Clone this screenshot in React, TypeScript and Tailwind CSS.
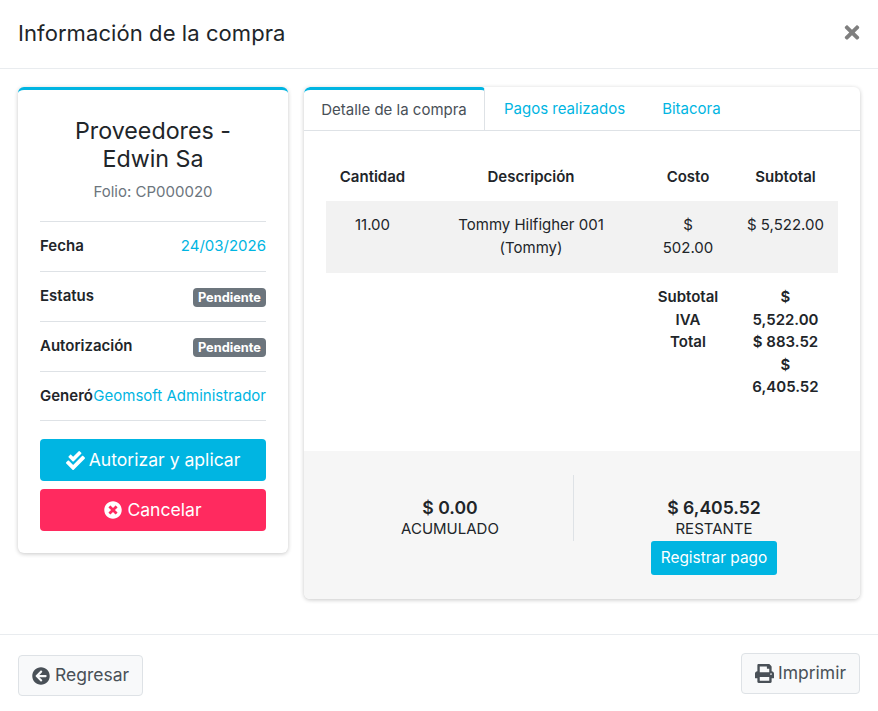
import { FaCheckDouble, FaTimesCircle, FaArrowCircleLeft, FaPrint, FaTimes } from "react-icons/fa";

function Row({ label, children, last }: { label: string; children: React.ReactNode; last?: boolean }) {
  return (
    <div className={`flex justify-between items-center h-[50px] border-t border-[#dee2e6] ${last ? "border-b" : ""}`}>
      <span className="font-semibold text-[15px] text-[#212529]">{label}</span>
      {children}
    </div>
  );
}

function Badge() {
  return <span className="bg-[#6c757d] text-white text-[12.8px] leading-[13px] font-bold px-[5px] py-[3px] rounded-[4px] mt-[2px]">Pendiente</span>;
}

export default function App() {
  return (
    <div className="w-[878px] h-[711px] bg-white flex flex-col text-[#212529] overflow-hidden" style={{ fontFamily: "Inter, 'Noto Sans', sans-serif" }}>
      <header className="h-[69px] shrink-0 border-b border-[#e9ecef] flex items-center justify-between px-[18px] pb-[2px]">
        <h1 className="text-[22px] tracking-[0.08px] font-normal text-[#212529]">Información de la compra</h1>
        <FaTimes className="text-[#7f7f7f] w-[16px] h-[21px] mb-[2px]" />
      </header>

      <main className="flex-1 flex items-start gap-[16px] pt-[18px] px-[18px]">
        <section className="w-[270px] h-[466px] shrink-0 bg-white rounded-[6px] border-t-[3px] border-[#00b5e2] shadow-[0_1px_4px_rgba(0,0,0,0.22)] px-[22px] pt-[27px]">
          <h2 className="text-[23.25px] leading-[28px] text-center text-[#212529] px-[20px]">Proveedores - Edwin Sa</h2>
          <p className="text-center text-[15px] leading-[21px] text-[#6c757d] mt-[8px] mb-[19px]">Folio: CP000020</p>
          <Row label="Fecha"><span className="text-[15px] text-[#00b5e2]">24/03/2026</span></Row>
          <Row label="Estatus"><Badge /></Row>
          <Row label="Autorización"><Badge /></Row>
          <Row label="Generó" last><span className="text-[15px] text-[#00b5e2]">Geomsoft Administrador</span></Row>
          <button className="mt-[18px] w-full h-[42px] rounded-[4px] bg-[#00b5e2] text-white text-[17.6px] flex items-center justify-center gap-[4px]">
            <FaCheckDouble className="w-[19px] h-[19px]" /> Autorizar y aplicar
          </button>
          <button className="mt-[8px] w-full h-[42px] rounded-[4px] bg-[#ff2a5f] text-white text-[17.6px] flex items-center justify-center gap-[5px]">
            <FaTimesCircle className="w-[18px] h-[18px]" /> Cancelar
          </button>
        </section>

        <section className="flex-1 h-[512px] bg-white rounded-[6px] shadow-[0_1px_4px_rgba(0,0,0,0.22)] flex flex-col overflow-hidden">
          <nav className="h-[44px] shrink-0 flex border-b border-[#dee2e6] text-[15px]">
            <div className="w-[181px] border-t-[3px] border-r border-[#00b5e2] border-r-[#dee2e6] rounded-tl-[6px] rounded-tr-[4px] flex items-center justify-center text-[#495057]">Detalle de la compra</div>
            <div className="px-[19px] pt-[1px] flex items-center text-[#00b5e2]">Pagos realizados</div>
            <div className="px-[18px] pt-[1px] flex items-center text-[#00b5e2]">Bitacora</div>
          </nav>

          <div className="flex-1 px-[22px] pt-[22px]">
            <table className="w-[512px] table-fixed text-[15px] text-center">
              <colgroup>
                <col className="w-[93px]" />
                <col className="w-[224px]" />
                <col className="w-[90px]" />
                <col className="w-[105px]" />
              </colgroup>
              <thead>
                <tr className="h-[48px]">
                  <th className="font-semibold">Cantidad</th>
                  <th className="font-semibold">Descripción</th>
                  <th className="font-semibold">Costo</th>
                  <th className="font-semibold">Subtotal</th>
                </tr>
              </thead>
              <tbody>
                <tr className="h-[72px] bg-[#f2f2f2] align-top">
                  <td className="pt-[13px] leading-[22.5px]">11.00</td>
                  <td className="pt-[13px] leading-[22.5px] px-[20px]">Tommy Hilfigher 001 (Tommy)</td>
                  <td className="pt-[13px] leading-[22.5px] px-[16px]">$ 502.00</td>
                  <td className="pt-[13px] leading-[22.5px]">$ 5,522.00</td>
                </tr>
                <tr className="align-top font-semibold leading-[22.5px]">
                  <td colSpan={2}></td>
                  <td className="pt-[13px]">Subtotal<br />IVA<br />Total</td>
                  <td className="pt-[13px] px-[14px]">$ 5,522.00<br />$ 883.52<br />$ 6,405.52</td>
                </tr>
              </tbody>
            </table>
          </div>

          <div className="h-[148px] shrink-0 bg-[#f6f6f6] flex pt-[24px] text-center">
            <div className="w-[270px] h-[66px] border-r border-[#dee2e6] flex flex-col items-center pt-[22px] pl-[23px]">
              <span className="text-[17.6px] leading-[22px] font-semibold">$ 0.00</span>
              <span className="text-[15px] leading-[20px]">ACUMULADO</span>
            </div>
            <div className="flex-1 flex flex-col items-center pt-[22px] pr-[6px]">
              <span className="text-[17.6px] leading-[22px] font-semibold">$ 6,405.52</span>
              <span className="text-[15px] leading-[20px]">RESTANTE</span>
              <button className="mt-[2px] h-[34px] w-[126px] rounded-[3px] bg-[#00b5e2] text-white text-[15.4px]">Registrar pago</button>
            </div>
          </div>
        </section>
      </main>

      <footer className="h-[77px] shrink-0 border-t border-[#e9ecef] flex justify-between pt-[20px] px-[18px]">
        <button className="h-[41px] w-[125px] rounded-[4px] border border-[#dee2e6] bg-[#f8f9fa] text-[#495057] text-[17.5px] flex items-center justify-center gap-[5px]">
          <FaArrowCircleLeft className="w-[18px] h-[18px]" /> Regresar
        </button>
        <button className="h-[41px] w-[119px] -mt-[2px] rounded-[4px] border border-[#dee2e6] bg-[#f8f9fa] text-[#495057] text-[17.5px] flex items-center justify-center gap-[4px]">
          <FaPrint className="w-[19px] h-[19px]" /> Imprimir
        </button>
      </footer>
    </div>
  );
}
